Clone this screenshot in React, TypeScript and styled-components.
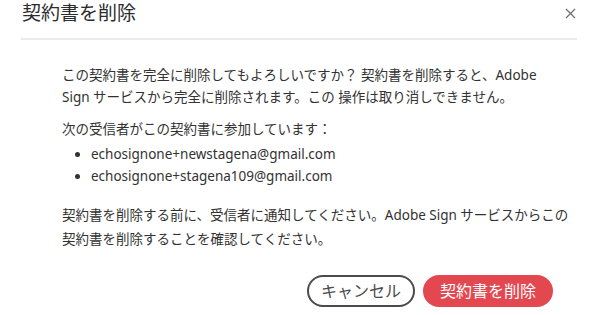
import React from 'react';
import styled, { createGlobalStyle } from 'styled-components';

const GlobalStyle = createGlobalStyle`
  html, body {
    margin: 0;
    padding: 0;
    background: #ffffff;
  }
  body {
    font-family: "Noto Sans", "Noto Sans CJK JP", sans-serif;
    color: #323232;
  }
`;

const Dialog = styled.div`
  width: 600px;
  height: 315px;
  background: #fff;
  box-sizing: border-box;
  overflow: hidden;
  display: flex;
  flex-direction: column;
`;

const Header = styled.div`
  margin: 0 23px 0 21px;
  height: 38px;
  border-bottom: 2px solid #eaeaea;
  display: flex;
  align-items: flex-start;
  justify-content: space-between;
`;

const Title = styled.h2`
  margin: 0;
  padding-left: 1px;
  font-size: 19px;
  line-height: 26px;
  font-weight: 400;
  color: #2c2c2c;
`;

const CloseButton = styled.button`
  border: none;
  background: none;
  padding: 0;
  margin-top: 8px;
  width: 12px;
  height: 12px;
  cursor: pointer;
  display: flex;
  svg {
    display: block;
  }
`;

const Body = styled.div`
  padding: 24px 20px 0 62px;
  font-size: 13.5px;
  line-height: 22px;
  color: #323232;
`;

const Paragraph = styled.p<{ $gap?: number; $lineHeight?: number }>`
  margin: 0 0 ${(p) => p.$gap ?? 10}px;
  line-height: ${(p) => p.$lineHeight ?? 22}px;
`;

const List = styled.ul`
  margin: 0 0 16px;
  padding: 0 0 0 29px;
  list-style: disc;
  li {
    line-height: 22px;
  }
`;

const Footer = styled.div`
  display: flex;
  justify-content: flex-end;
  gap: 8px;
  padding: 24px 47px 0 0;
`;

const Button = styled.button<{ $primary?: boolean }>`
  height: 32px;
  border-radius: 16px;
  box-sizing: border-box;
  font-family: "Noto Sans", "Noto Sans CJK JP", sans-serif;
  font-size: 16px;
  line-height: 1;
  padding: 0;
  cursor: pointer;
  width: ${(p) => (p.$primary ? '130px' : '108px')};
  border: ${(p) => (p.$primary ? '2px solid #e34850' : '2px solid #4b4b4b')};
  background: ${(p) => (p.$primary ? '#e34850' : '#ffffff')};
  color: ${(p) => (p.$primary ? '#ffffff' : '#4b4b4b')};
`;

const App = () => {
  return (
    <>
      <GlobalStyle />
      <Dialog>
        <Header>
          <Title>契約書を削除</Title>
          <CloseButton aria-label="閉じる">
            <svg width="11" height="11" viewBox="0 0 11 11">
              <path d="M1 1 L10 10 M10 1 L1 10" stroke="#6e6e6e" strokeWidth="1.2" fill="none" />
            </svg>
          </CloseButton>
        </Header>
        <Body>
          <Paragraph>
            この契約書を完全に削除してもよろしいですか？ 契約書を削除すると、Adobe
            <br />
            Sign サービスから完全に削除されます。この 操作は取り消しできません。
          </Paragraph>
          <Paragraph $gap={3}>次の受信者がこの契約書に参加しています：</Paragraph>
          <List>
            <li>echosignone+newstagena@gmail.com</li>
            <li>echosignone+stagena109@gmail.com</li>
          </List>
          <Paragraph $gap={0} $lineHeight={24}>
            契約書を削除する前に、受信者に通知してください。Adobe Sign サービスからこの
            <br />
            契約書を削除することを確認してください。
          </Paragraph>
        </Body>
        <Footer>
          <Button>キャンセル</Button>
          <Button $primary>契約書を削除</Button>
        </Footer>
      </Dialog>
    </>
  );
};

export default App;
